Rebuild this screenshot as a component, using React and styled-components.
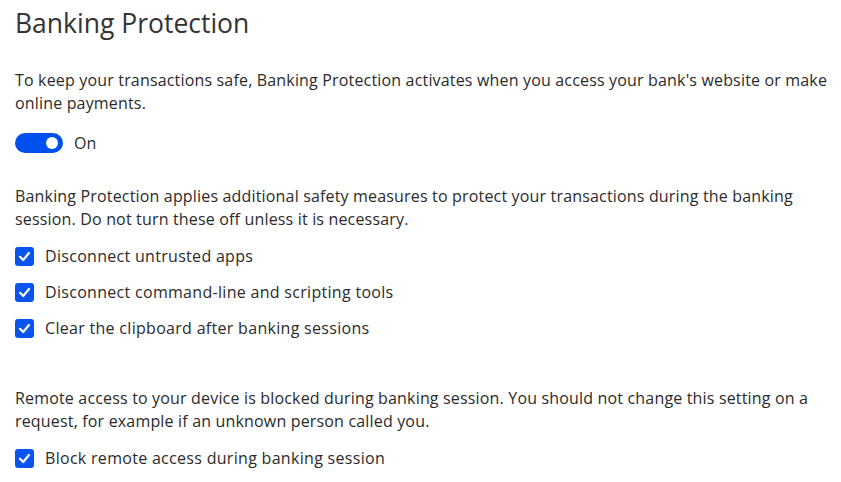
import styled, { createGlobalStyle } from 'styled-components';

const Global = createGlobalStyle`
  body {
    margin: 0;
    background: #ffffff;
    font-family: "Open Sans", "Noto Sans", sans-serif;
    color: #2b2b2b;
  }
`;

const Page = styled.div`
  padding: 3px 0 0 15px;
`;

const Title = styled.h1`
  margin: 0 0 26px 0;
  font-size: 26.5px;
  font-weight: 400;
  line-height: 40px;
  color: #333333;
`;

const Para = styled.p`
  margin: 0;
  font-size: 16px;
  letter-spacing: 0.17px;
  line-height: 23px;
`;

const ToggleRow = styled.label`
  display: flex;
  align-items: center;
  gap: 11px;
  margin: 17px 0 31px 0;
  font-size: 16px;
`;

const Track = styled.span`
  position: relative;
  width: 48px;
  height: 20px;
  border-radius: 10px;
  background: ${(p) => (p.$on ? '#0050ef' : '#888')};
`;

const Knob = styled.span`
  position: absolute;
  top: 4px;
  right: 5px;
  width: 12px;
  height: 12px;
  border-radius: 50%;
  background: #fff;
`;

const Checks = styled.div`
  display: flex;
  flex-direction: column;
  gap: 13px;
  margin-top: 14px;
`;

const CheckRow = styled.label`
  display: flex;
  align-items: center;
  gap: 11px;
  font-size: 16px;
  letter-spacing: 0.3px;
  line-height: 23px;
`;

const Box = styled.span`
  width: 19px;
  height: 19px;
  border-radius: 3px;
  background: #0a55f0;
  display: flex;
  align-items: center;
  justify-content: center;
`;

const Section = styled.div`
  margin-top: ${(p) => p.$top || 0}px;
`;

const Check = ({ children }) => (
  <CheckRow>
    <Box>
      <svg width="13" height="13" viewBox="0 0 13 13">
        <path d="M2 6.8 L5.2 10 L11 3" fill="none" stroke="#fff" strokeWidth="2.2" strokeLinecap="round" strokeLinejoin="round" />
      </svg>
    </Box>
    {children}
  </CheckRow>
);

export default function App() {
  return (
    <>
      <Global />
      <Page>
        <Title>Banking Protection</Title>
        <Para>
          To keep your transactions safe, Banking Protection activates when you access your bank's website or make online payments.
        </Para>
        <ToggleRow>
          <Track $on>
            <Knob />
          </Track>
          On
        </ToggleRow>
        <Para>
          Banking Protection applies additional safety measures to protect your transactions during the banking session. Do not turn these off unless it is necessary.
        </Para>
        <Checks>
          <Check>Disconnect untrusted apps</Check>
          <Check>Disconnect command-line and scripting tools</Check>
          <Check>Clear the clipboard after banking sessions</Check>
        </Checks>
        <Section $top={47}>
          <Para>
            Remote access to your device is blocked during banking session. You should not change this setting on a request, for example if an unknown person called you.
          </Para>
          <Checks>
            <Check>Block remote access during banking session</Check>
          </Checks>
        </Section>
      </Page>
    </>
  );
}
